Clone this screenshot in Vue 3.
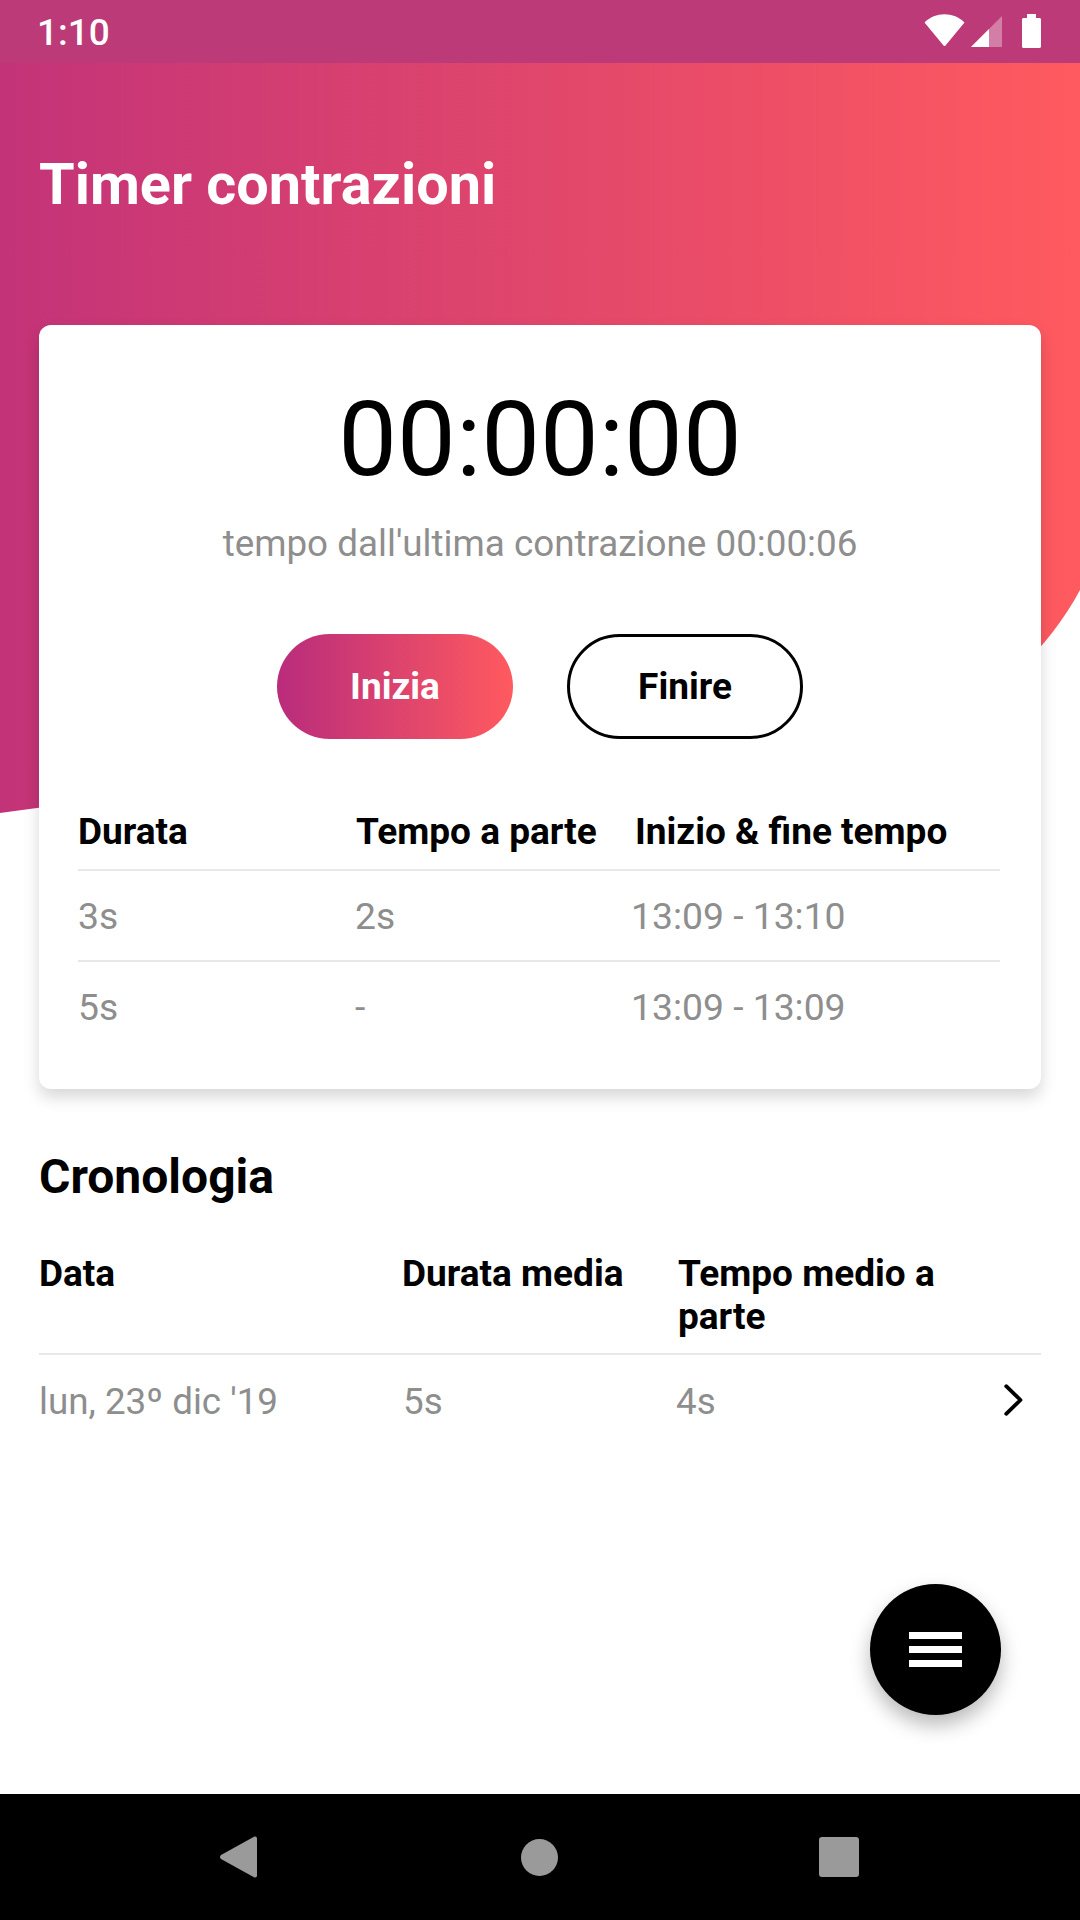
<template>
  <div class="page">
    <!-- coloured blob behind the header and the top of the card -->
    <svg class="blob" width="1080" height="820" viewBox="0 0 1080 820">
      <defs>
        <linearGradient id="blobGrad" x1="0" y1="0" x2="1" y2="0">
          <stop offset="0" stop-color="#c33378" />
          <stop offset="1" stop-color="#ff5a5f" />
        </linearGradient>
      </defs>
      <path d="M0 0H1080V590C1040 665 960 735 830 770C640 815 480 740 300 768C190 785 90 802 0 813Z" fill="url(#blobGrad)" />
    </svg>

    <div class="status-bar">
      <span class="clock">1:10</span>
      <div class="status-icons">
        <svg width="41" height="33" viewBox="0 0 41 33">
          <path d="M0.5 8.5C11 -2.5 30 -2.5 40.5 8.5L21.5 31.5C21 32.3 20 32.3 19.5 31.5Z" fill="#fff" />
        </svg>
        <svg class="signal" width="31" height="31" viewBox="0 0 31 31">
          <path d="M0 31L31 0V31Z" fill="#fff" fill-opacity="0.35" />
          <path d="M0 31L18 13V31Z" fill="#fff" />
        </svg>
        <svg class="battery" width="19" height="34" viewBox="0 0 19 34">
          <path d="M5 0H14V4H17.500C18.300 4 19 4.700 19 5.500V32.500C19 33.300 18.300 34 17.500 34H1.500C0.700 34 0 33.300 0 32.500V5.500C0 4.700 0.700 4 1.500 4H5Z" fill="#fff" />
        </svg>
      </div>
    </div>

    <main class="content">
      <h1 class="title">Timer contrazioni</h1>

      <section class="card">
        <div class="timer">00:00:00</div>
        <p class="since">tempo dall'ultima contrazione 00:00:06</p>
        <div class="actions">
          <button type="button" class="btn btn-start">Inizia</button>
          <button type="button" class="btn btn-end">Finire</button>
        </div>

        <div class="table-head">
          <span>Durata</span>
          <span>Tempo a parte</span>
          <span>Inizio &amp; fine tempo</span>
        </div>
        <div class="table-row" v-for="row in contractions" :key="row.range">
          <span>{{ row.duration }}</span>
          <span>{{ row.apart }}</span>
          <span class="range">{{ row.range }}</span>
        </div>
      </section>

      <h2 class="history-title">Cronologia</h2>
      <div class="history-head">
        <span>Data</span>
        <span>Durata media</span>
        <span>Tempo medio a parte</span>
      </div>
      <div class="history-row">
        <span>lun, 23º dic '19</span>
        <span>5s</span>
        <span class="avg">4s</span>
        <svg class="chevron" width="19" height="32" viewBox="0 0 19 32">
          <path d="M2.200 2.200L16.500 16L2.200 29.800" fill="none" stroke="#000" stroke-width="3.800" stroke-linecap="round" stroke-linejoin="round" />
        </svg>
      </div>
    </main>

    <button type="button" class="fab" aria-label="Menu">
      <span></span>
      <span></span>
      <span></span>
    </button>

    <nav class="nav-bar">
      <svg width="37" height="42" viewBox="0 0 37 42">
        <path d="M1 19L34 0.800C35.500 0 37 0.800 37 2.500V39.500C37 41.200 35.500 42 34 41.200L1 23C-0.300 22 -0.300 20 1 19Z" fill="#9a9a9a" />
      </svg>
      <span class="nav-home"></span>
      <span class="nav-recent"></span>
    </nav>
  </div>
</template>

<script setup>
const contractions = [
  { duration: "3s", apart: "2s", range: "13:09 - 13:10" },
  { duration: "5s", apart: "-", range: "13:09 - 13:09" },
];
</script>

<style>
html,
body {
  margin: 0;
  background: #fff;
}
</style>

<style scoped>
.page {
  position: relative;
  width: 1080px;
  height: 1920px;
  display: flex;
  flex-direction: column;
  overflow: hidden;
  background: #fff;
  font-family: Roboto, "Liberation Sans", sans-serif;
  color: #000;
}

.blob {
  position: absolute;
  top: 0;
  left: 0;
}

.status-bar {
  position: relative;
  height: 63px;
  flex-shrink: 0;
  display: flex;
  justify-content: space-between;
  background: #bc3a77;
  color: #fff;
  padding: 0 39px;
}

.clock {
  margin-left: -2px;
  font-size: 37px;
  font-weight: 500;
  line-height: 66px;
}

.status-icons {
  display: flex;
  align-items: flex-start;
  padding-top: 14px;
}

.signal {
  margin: 2px 0 0 6px;
}

.battery {
  margin-left: 20px;
}

.content {
  position: relative;
  flex: 1;
  padding: 0 39px;
}

.title {
  margin: 88px 0 0;
  font-size: 57.6px;
  line-height: 68px;
  font-weight: 700;
  color: #fff;
}

.card {
  margin-top: 106px;
  height: 764px;
  box-sizing: border-box;
  padding: 0 39px;
  background: #fff;
  border-radius: 12px;
  box-shadow: 0 8px 16px rgba(0, 0, 0, 0.16);
}

.timer {
  padding-top: 54px;
  font-size: 104.6px;
  line-height: 122px;
  text-align: center;
}

.since {
  margin: 21px 0 0;
  font-size: 36.8px;
  line-height: 44px;
  color: #8e8e8e;
  text-align: center;
}

.actions {
  display: flex;
  justify-content: center;
  gap: 54px;
  margin-top: 68px;
}

.btn {
  width: 236px;
  height: 105px;
  box-sizing: border-box;
  border-radius: 53px;
  font-family: inherit;
  font-size: 37px;
  font-weight: 700;
  cursor: pointer;
}

.btn-start {
  border: none;
  background: linear-gradient(90deg, #b92c7c, #ff5a5f);
  color: #fff;
}

.btn-end {
  border: 3px solid #000;
  background: #fff;
  color: #000;
}

.table-head {
  display: grid;
  grid-template-columns: 278px 279px 1fr;
  margin: 72px 2px 0 0;
  height: 58px;
  font-size: 37px;
  font-weight: 700;
  line-height: 42px;
  border-bottom: 2px solid #e8e8e8;
}

.table-row {
  display: grid;
  grid-template-columns: 277px 276px 1fr;
  margin-right: 2px;
  height: 89px;
  align-items: center;
  font-size: 37.300px;
  color: #8e8e8e;
}

.table-row + .table-row {
  border-top: 2px solid #e8e8e8;
}

.history-title {
  margin: 60px 0 0;
  font-size: 48px;
  line-height: 56px;
  font-weight: 700;
}

.history-head {
  display: grid;
  grid-template-columns: 363px 276px 260px;
  margin-top: 47px;
  padding-bottom: 15px;
  font-size: 37px;
  font-weight: 700;
  line-height: 43px;
  border-bottom: 2px solid #e8e8e8;
}

.history-row {
  position: relative;
  display: grid;
  grid-template-columns: 364px 273px 1fr;
  height: 92px;
  align-items: center;
  font-size: 36.800px;
  color: #8e8e8e;
}

.chevron {
  position: absolute;
  right: 18px;
  top: 29px;
}

.fab {
  position: absolute;
  left: 870px;
  top: 1584px;
  width: 131px;
  height: 131px;
  padding: 0;
  border: none;
  border-radius: 50%;
  background: #000;
  box-shadow: 0 10px 20px rgba(0, 0, 0, 0.28);
  display: flex;
  flex-direction: column;
  align-items: center;
  justify-content: center;
  gap: 7px;
}

.fab span {
  display: block;
  width: 53px;
  height: 7px;
  background: #fff;
}

.nav-bar {
  position: relative;
  height: 126px;
  flex-shrink: 0;
  background: #000;
  display: flex;
  align-items: center;
  padding-left: 220px;
}

.nav-home {
  width: 37px;
  height: 37px;
  margin-left: 264px;
  border-radius: 50%;
  background: #9a9a9a;
}

.nav-recent {
  width: 40px;
  height: 40px;
  margin-left: 261px;
  border-radius: 3px;
  background: #9a9a9a;
}
</style>
